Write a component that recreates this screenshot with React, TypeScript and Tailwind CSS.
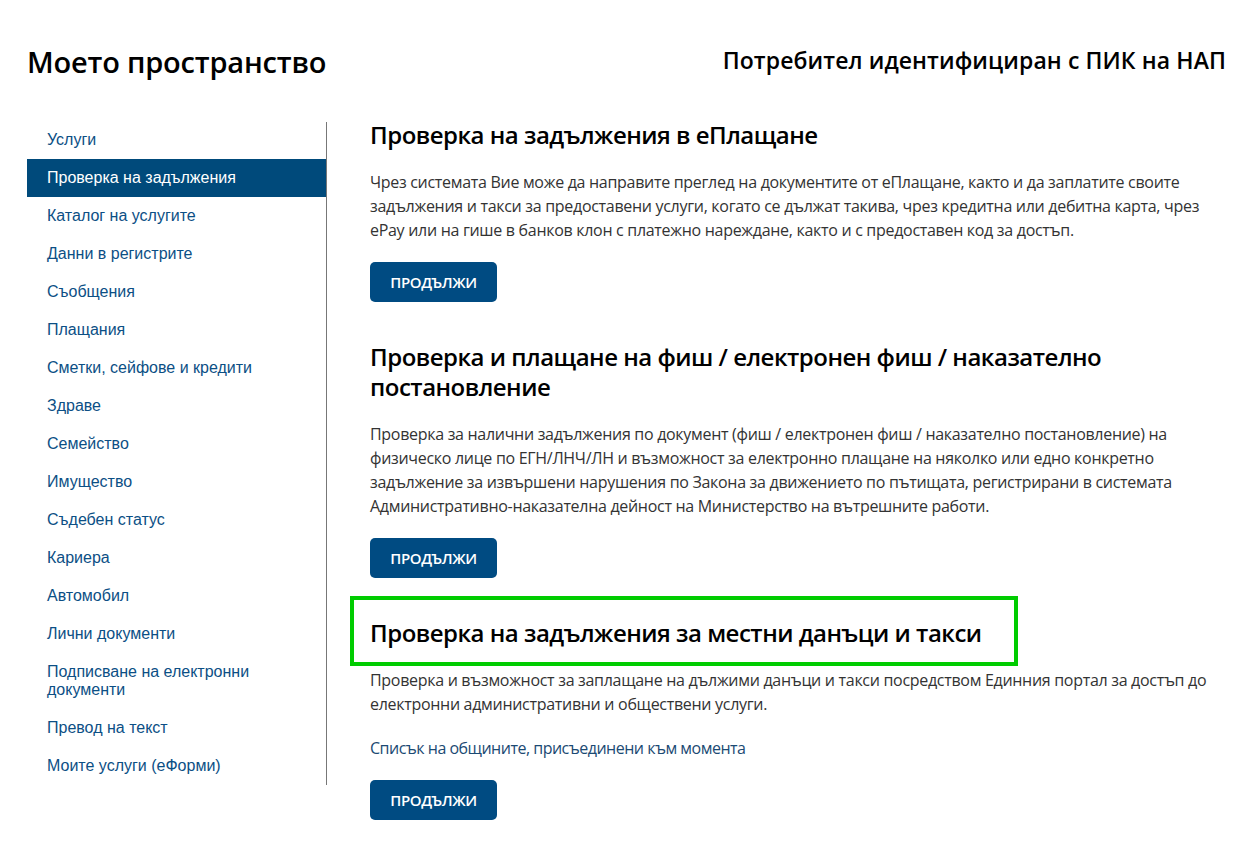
import React from "react";

const menu = [
  "Услуги",
  "Проверка на задължения",
  "Каталог на услугите",
  "Данни в регистрите",
  "Съобщения",
  "Плащания",
  "Сметки, сейфове и кредити",
  "Здраве",
  "Семейство",
  "Имущество",
  "Съдебен статус",
  "Кариера",
  "Автомобил",
  "Лични документи",
  "Подписване на електронни документи",
  "Превод на текст",
  "Моите услуги (еФорми)",
];

function Btn() {
  return (
    <button className="h-[40px] w-[127px] rounded-[5px] bg-[#004b82] text-white text-[15px] font-semibold tracking-[-0.4px] uppercase">
      Продължи
    </button>
  );
}

export default function App() {
  return (
    <div
      className="min-h-[864px] bg-white pl-[27px] pr-[22px] text-[#333]"
      style={{ fontFamily: '"Open Sans", "Noto Sans", sans-serif' }}
    >
      <header className="flex justify-between pt-[42px] h-[122px] items-start">
        <h1 className="text-[29px] leading-[40px] font-semibold text-black tracking-[-0.2px]">Моето пространство</h1>
        <div className="text-[23px] leading-[40px] font-semibold text-black mt-[-2px] tracking-[0.1px]">
          Потребител идентифициран с ПИК на НАП
        </div>
      </header>
      <div className="flex">
        <nav className="w-[300px] shrink-0 border-r border-[#777] h-[663px]">
          <ul className="-mt-[1px]" style={{ fontFamily: '"Liberation Sans", Arial, sans-serif' }}>
            {menu.map((m, i) => (
              <li key={m}>
                <a
                  className={
                    "block pl-[20px] pr-[40px] py-[10px] text-[16px] leading-[18px] " +
                    (i === 1 ? "bg-[#004a7b] text-white" : "text-[#0c4f85]")
                  }
                >
                  {m}
                </a>
              </li>
            ))}
          </ul>
        </nav>
        <main className="flex-1 pl-[43px] -mt-[2px]">
          <section>
            <h2 className="text-[24px] leading-[30px] font-semibold text-black tracking-[-0.5px]">
              Проверка на задължения в еПлащане
            </h2>
            <p className="mt-[20px] text-[16px] leading-[24px] tracking-[-0.3px]">
              Чрез системата Вие може да направите преглед на документите от еПлащане, както и да заплатите своите задължения и такси за предоставени услуги, когато се дължат такива, чрез кредитна или дебитна карта, чрез ePay или на гише в банков клон с платежно нареждане, както и с предоставен код за достъп.
            </p>
            <div className="mt-[20px]">
              <Btn />
            </div>
          </section>
          <section className="mt-[40px]">
            <h2 className="text-[24px] leading-[30px] font-semibold text-black tracking-[-0.5px]">
              Проверка и плащане на фиш / електронен фиш / наказателно постановление
            </h2>
            <p className="mt-[20px] text-[16px] leading-[24px] tracking-[-0.3px]">
              Проверка за налични задължения по документ (фиш / електронен фиш / наказателно постановление) на физическо лице по ЕГН/ЛНЧ/ЛН и възможност за електронно плащане на няколко или едно конкретно задължение за извършени нарушения по Закона за движението по пътищата, регистрирани в системата Административно-наказателна дейност на Министерство на вътрешните работи.
            </p>
            <div className="mt-[20px]">
              <Btn />
            </div>
          </section>
          <section className="mt-[18px]">
            <div className="-ml-[20px] w-[668px] border-4 border-[#00cc00] pl-[16px] pt-[18px] pb-[14px]">
              <h2 className="text-[24px] leading-[30px] font-semibold text-black tracking-[-0.5px]">
                Проверка на задължения за местни данъци и такси
              </h2>
            </div>
            <p className="mt-[2px] text-[16px] leading-[24px] tracking-[-0.3px]">
              Проверка и възможност за заплащане на дължими данъци и такси посредством Единния портал за достъп до електронни административни и обществени услуги.
            </p>
            <p className="mt-[20px] text-[16px] leading-[24px] text-[#1b4a73] tracking-[-0.5px]">
              Списък на общините, присъединени към момента
            </p>
            <div className="mt-[20px]">
              <Btn />
            </div>
          </section>
        </main>
      </div>
    </div>
  );
}
